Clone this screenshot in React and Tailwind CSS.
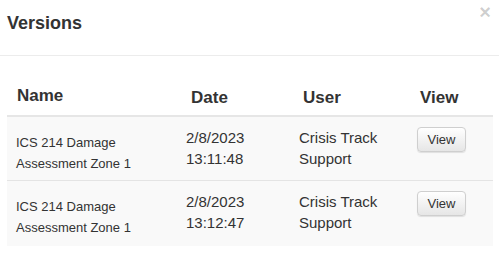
import React from 'react';

const rows = [
  { name: ['ICS 214 Damage', 'Assessment Zone 1'], date: '2/8/2023', time: '13:11:48', user: ['Crisis Track', 'Support'] },
  { name: ['ICS 214 Damage', 'Assessment Zone 1'], date: '2/8/2023', time: '13:12:47', user: ['Crisis Track', 'Support'] },
];

export default function App() {
  return (
    <div className="w-[499px] h-[254px] bg-white text-[#333] overflow-hidden" style={{ fontFamily: '"Liberation Sans", Arial, sans-serif' }}>
      {/* modal header */}
      <div className="h-[56px] border-b border-[#ececec] flex justify-between items-start pl-[7px] pr-[8px]">
        <h4 className="text-[18px] leading-[20px] font-bold mt-[13px]">Versions</h4>
        <button className="text-[20px] leading-[20px] font-bold text-black/20 mt-[2px]">×</button>
      </div>

      {/* table */}
      <div className="ml-[7px] w-[486px]">
        <div className="h-[61px] flex items-end border-b-2 border-[#e6e6e6] text-[17px] leading-[24px] font-bold">
          <div className="w-[170px] pl-[10px] pb-[7px]">Name</div>
          <div className="w-[116px] pl-[14px] pb-[5px]">Date</div>
          <div className="w-[117px] pl-[10px] pb-[5px]">User</div>
          <div className="w-[83px] pl-[10px] pb-[5px]">View</div>
        </div>

        {rows.map((r, i) => (
          <div key={i} className={`flex items-start bg-[#f9f9f9] ${i === 0 ? 'h-[64px] border-b border-[#e4e4e4]' : 'h-[65px]'}`}>
            <div className="w-[170px] pl-[9px] pt-[15px] text-[13px] leading-[21px]">
              {r.name.map(l => <div key={l}>{l}</div>)}
            </div>
            <div className="w-[116px] pl-[9px] pt-[10px] text-[15px] leading-[21px]">
              <div>{r.date}</div>
              <div>{r.time}</div>
            </div>
            <div className="w-[117px] pl-[6px] pt-[10px] text-[15px] leading-[21px]">
              {r.user.map(l => <div key={l}>{l}</div>)}
            </div>
            <div className="w-[83px] pl-[7px] pt-[10px]">
              <button className="w-[49px] h-[25px] text-[13px] leading-[17px] text-[#333] border border-[#cfcfcf] rounded-[4px] bg-gradient-to-b from-white to-[#e6e6e6] shadow-[0_1px_1px_rgba(0,0,0,0.1)]">
                View
              </button>
            </div>
          </div>
        ))}
      </div>
    </div>
  );
}
